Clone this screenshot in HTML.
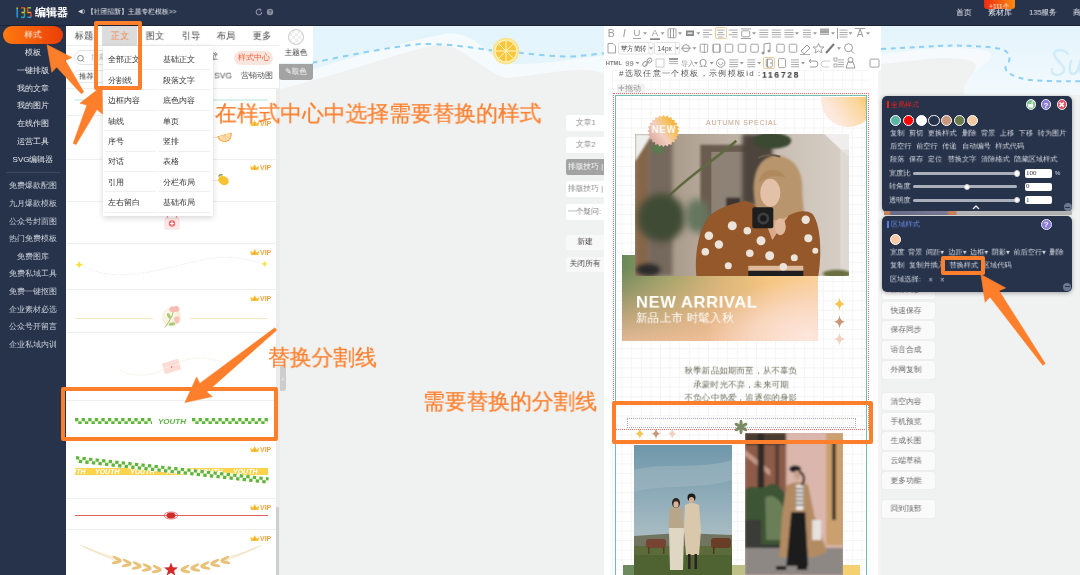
<!DOCTYPE html><html><head><meta charset="utf-8"><style>
*{margin:0;padding:0;box-sizing:border-box}
html,body{width:1080px;height:575px;overflow:hidden;background:#f0f2f1;font-family:"Liberation Sans",sans-serif}
.a{position:absolute}
.t{position:absolute;white-space:nowrap;line-height:1;will-change:transform}
.tc{position:absolute;white-space:nowrap;line-height:1;transform:translate(-50%,-50%);will-change:transform}
</style></head><body><svg class="a" style="left:276px;top:25px" width="330" height="140" viewBox="276 25 330 140">
<defs><linearGradient id="sky1" x1="0" y1="0" x2="0" y2="1"><stop offset="0" stop-color="#e3f4fc"/><stop offset="1" stop-color="#eef8fc"/></linearGradient></defs>
<rect x="276" y="25" width="330" height="140" fill="url(#sky1)"/>
<path d="M276 80 C320 68 400 42 440 35 Q455 31 470 38 C488 48 492 62 515 64 C540 65 570 59 606 55.5 L606 165 L276 165 Z" fill="#f5fafd"/>
<path d="M276 90 C330 77 400 53 433 45.5 Q447 43 462 52 C480 62 492 76 508 78 C530 76 560 70 580 70 C592 70 600 72 606 74 L606 165 L276 165Z" fill="#f0f2f1"/>
<path d="M312 62.8 C350 55 390 47 418 44.2 C440 43 470 47 492 50.5 M518 52.5 C540 55 555 56.5 570 56.5 C585 56 595 54 606 53.2" fill="none" stroke="#8dd0f2" stroke-width="2" stroke-dasharray="5.5 5"/>
</svg><svg class="a" style="left:492px;top:37px" width="28" height="28" viewBox="0 0 28 28">
<circle cx="14" cy="14" r="13.3" fill="#fbe38a"/><circle cx="14" cy="14" r="11.5" fill="#fff3c0"/><circle cx="14" cy="14" r="10.3" fill="#fcc63a"/>
<g stroke="#fff6d0" stroke-width="1">
<line x1="14" y1="4" x2="14" y2="24"/><line x1="4" y1="14" x2="24" y2="14"/><line x1="7" y1="7" x2="21" y2="21"/><line x1="21" y1="7" x2="7" y2="21"/></g>
</svg><div class="a" style="left:0;top:0;width:1080px;height:25px;background:#27334b"></div><svg class="a" style="left:0;top:0" width="40" height="25" viewBox="0 0 40 25"><g stroke-width="1.5" stroke-linecap="butt" fill="none"><path d="M17.2 9 V17.5" stroke="#1d9fe0"/><path d="M17.2 7.6 V9" stroke="#f2c21a"/><path d="M21 7.8 H24.5" stroke="#e8452a"/><path d="M24.5 7.8 V12.5" stroke="#8cc43a"/><path d="M21.5 12.5 H24.5" stroke="#f6c21c"/><path d="M24.5 12.5 V17.3" stroke="#3aaa5a"/><path d="M21 17.3 H24.5" stroke="#1d9fe0"/><path d="M27.5 7.8 H31" stroke="#8cc43a"/><path d="M27.5 7.8 V12.5" stroke="#e8452a"/><path d="M27.5 12.5 H31" stroke="#f6a21c"/><path d="M31 12.5 V17.3" stroke="#e8452a"/><path d="M27.5 17.3 H31" stroke="#1d9fe0"/></g></svg><div class="t" style="left:35.4px;top:7.1px;font-size:11px;color:#fff;font-weight:bold">编辑器</div><div class="t" style="left:78px;top:8px;font-size:6px;color:#d8dce4;">◀)</div><div class="t" style="left:86.5px;top:8.1px;font-size:7px;color:#eef0f4;transform:scale(0.9714);transform-origin:0 0;">【社团招新】主题专栏模板>></div><svg class="a" style="left:254px;top:7px" width="22" height="10" viewBox="0 0 22 10"><path d="M7.8 5 A2.8 2.8 0 1 1 7 3" fill="none" stroke="#8a92a0" stroke-width="1.1"/><path d="M5.8 1.8 L7.3 3.2 L5.8 4.4" fill="none" stroke="#8a92a0" stroke-width="0.9"/><circle cx="16" cy="5" r="3.2" fill="#8a92a0"/><text x="16" y="7" font-size="5" font-weight="bold" fill="#27334b" text-anchor="middle" font-family="Liberation Sans">?</text></svg><div class="t" style="left:956px;top:8.5px;font-size:8px;color:#e6e9ee;transform:scale(0.9750);transform-origin:0 0;">首页</div><div class="t" style="left:988px;top:8.5px;font-size:8px;color:#e6e9ee;">素材库</div><div class="a" style="left:984px;top:0;width:31px;height:9px;background:linear-gradient(90deg,#ee2a10,#ff8a10);border-radius:0 0 3px 3px"></div><div class="t" style="left:989px;top:2.6px;font-size:7px;color:#fff;transform:scale(0.9286);transform-origin:0 0;">+111个</div><div class="t" style="left:1028.8px;top:8.5px;font-size:8px;color:#e6e9ee;transform:scale(0.9500);transform-origin:0 0;">135服务</div><div class="t" style="left:1073px;top:8.5px;font-size:8px;color:#e6e9ee;transform:scale(0.9750);transform-origin:0 0;">商</div><div class="a" style="left:0;top:25px;width:66px;height:550px;background:#27334b"></div><div class="a" style="left:3px;top:26px;width:60px;height:18px;border-radius:9px;background:linear-gradient(90deg,#ff7a10,#ea3e08)"></div><div class="tc" style="left:33px;top:35px;font-size:9px;color:#fff;transform:translate(-50%,-50%) scale(0.9444);">样式</div><div class="tc" style="left:33px;top:53.0px;font-size:8px;color:#e4e7ec;">模板</div><div class="tc" style="left:33px;top:70.75px;font-size:8px;color:#e4e7ec;">一键排版</div><div class="tc" style="left:33px;top:88.5px;font-size:8px;color:#e4e7ec;">我的文章</div><div class="tc" style="left:33px;top:106.25px;font-size:8px;color:#e4e7ec;">我的图片</div><div class="tc" style="left:33px;top:124.0px;font-size:8px;color:#e4e7ec;">在线作图</div><div class="tc" style="left:33px;top:141.75px;font-size:8px;color:#e4e7ec;">运营工具</div><div class="tc" style="left:33px;top:159.5px;font-size:8px;color:#e4e7ec;">SVG编辑器</div><div class="a" style="left:6px;top:172px;width:54px;height:1px;background:#3d4960"></div><div class="tc" style="left:33px;top:186.3px;font-size:8px;color:#c9ced8;">免费爆款配图</div><div class="tc" style="left:33px;top:203.9px;font-size:8px;color:#c9ced8;">九月爆款模板</div><div class="tc" style="left:33px;top:221.5px;font-size:8px;color:#c9ced8;">公众号封面图</div><div class="tc" style="left:33px;top:239.10000000000002px;font-size:8px;color:#c9ced8;">热门免费模板</div><div class="tc" style="left:33px;top:256.70000000000005px;font-size:8px;color:#c9ced8;">免费图库</div><div class="tc" style="left:33px;top:274.3px;font-size:8px;color:#c9ced8;">免费私域工具</div><div class="tc" style="left:33px;top:291.90000000000003px;font-size:8px;color:#c9ced8;">免费一键抠图</div><div class="tc" style="left:33px;top:309.5px;font-size:8px;color:#c9ced8;">企业素材必选</div><div class="tc" style="left:33px;top:327.1px;font-size:8px;color:#c9ced8;">公众号开留言</div><div class="tc" style="left:33px;top:344.70000000000005px;font-size:8px;color:#c9ced8;">企业私域内训</div><div class="a" style="left:66px;top:25px;width:210px;height:550px;background:#fff"></div><div class="a" style="left:276px;top:25px;width:4px;height:550px;background:#ececec"></div><div class="a" style="left:66px;top:25px;width:213px;height:64px;background:#fff;border-bottom:1px solid #eee"></div><div class="a" style="left:66px;top:45px;width:213px;height:1px;background:#eee"></div><div class="a" style="left:102px;top:25px;width:35px;height:21px;background:#dcdcdc"></div><div class="tc" style="left:84px;top:35.5px;font-size:10px;color:#444;transform:translate(-50%,-50%) scale(0.9300);">标题</div><div class="tc" style="left:119.5px;top:35.5px;font-size:10px;color:#f08040;transform:translate(-50%,-50%) scale(0.9300);">正文</div><div class="tc" style="left:155px;top:35.5px;font-size:10px;color:#444;transform:translate(-50%,-50%) scale(0.9300);">图文</div><div class="tc" style="left:191px;top:35.5px;font-size:10px;color:#444;transform:translate(-50%,-50%) scale(0.9300);">引导</div><div class="tc" style="left:226px;top:35.5px;font-size:10px;color:#444;transform:translate(-50%,-50%) scale(0.9300);">布局</div><div class="tc" style="left:261.5px;top:35.5px;font-size:10px;color:#444;transform:translate(-50%,-50%) scale(0.9300);">更多</div><div class="a" style="left:279px;top:25px;width:34px;height:38px;background:#fff"></div><div class="a" style="left:288px;top:29px;width:16px;height:16px;border-radius:50%;border:1px solid #ccc;background:repeating-conic-gradient(#eee 0 25%,#fff 0 50%) 0 0/6px 6px"></div><div class="tc" style="left:296px;top:53px;font-size:8px;color:#333;transform:translate(-50%,-50%) scale(0.9375);">主题色</div><div class="a" style="left:279px;top:64px;width:34px;height:16px;background:#a3a3a3;border-radius:0 0 3px 3px"></div><div class="tc" style="left:296px;top:72px;font-size:8px;color:#fff;transform:translate(-50%,-50%) scale(0.9375);">✎取色</div><div class="a" style="left:73.5px;top:50.3px;width:60px;height:15px;border:1px solid #e4e4e4;border-radius:8px;background:#fff"></div><svg class="a" style="left:76px;top:54px" width="10" height="10" viewBox="0 0 10 10"><circle cx="4.5" cy="4.2" r="2.8" fill="none" stroke="#888" stroke-width="1"/><path d="M6.5 6.3 L8 7.8" stroke="#888" stroke-width="1"/></svg><div class="t" style="left:90.5px;top:54px;font-size:8px;color:#bbb;transform:scale(0.9125);transform-origin:0 0;">搜索</div><div class="a" style="left:234px;top:51px;width:39px;height:14px;border-radius:7px;background:#fde5df"></div><div class="tc" style="left:253.5px;top:58px;font-size:8px;color:#f3623a;">样式中心</div><div class="t" style="left:210px;top:53px;font-size:8px;color:#666;">壁</div><div class="a" style="left:73.2px;top:70.3px;width:34px;height:12.5px;border:1px solid #e6e6e6;border-radius:6px"></div><div class="t" style="left:79px;top:72.8px;font-size:8px;color:#333;transform:scale(0.9125);transform-origin:0 0;">推荐</div><div class="tc" style="left:222.5px;top:76px;font-size:9px;color:#555;transform:translate(-50%,-50%) scale(0.9444);">SVG</div><div class="tc" style="left:257px;top:76px;font-size:8px;color:#555;">营销动图</div><div class="a" style="left:66px;top:114.5px;width:210px;height:1px;background:#efefef"></div><div class="a" style="left:66px;top:159px;width:210px;height:1px;background:#efefef"></div><div class="a" style="left:66px;top:201px;width:210px;height:1px;background:#efefef"></div><div class="a" style="left:66px;top:243px;width:210px;height:1px;background:#efefef"></div><div class="a" style="left:66px;top:289px;width:210px;height:1px;background:#efefef"></div><div class="a" style="left:66px;top:332px;width:210px;height:1px;background:#efefef"></div><div class="a" style="left:66px;top:400px;width:210px;height:1px;background:#efefef"></div><div class="a" style="left:66px;top:498px;width:210px;height:1px;background:#efefef"></div><div class="a" style="left:66px;top:529px;width:210px;height:1px;background:#efefef"></div><div class="a" style="left:75px;top:99px;width:193px;height:1.5px;background:#d8f2ec"></div><svg class="a" style="left:250.2px;top:119.9px" width="9.4" height="6.2" viewBox="0 0 9.4 6.2"><path d="M0.2 1.4 L2.6 3.6 L4.7 0.2 L6.8 3.6 L9.2 1.4 L8.4 6 H1Z" fill="#f7c23a"/><circle cx="4.7" cy="4.3" r="0.8" fill="#f08a4a"/></svg><div class="t" style="left:260px;top:119.9px;font-size:7px;color:#f5a23f;font-weight:bold">VIP</div><svg class="a" style="left:250.2px;top:163.9px" width="9.4" height="6.2" viewBox="0 0 9.4 6.2"><path d="M0.2 1.4 L2.6 3.6 L4.7 0.2 L6.8 3.6 L9.2 1.4 L8.4 6 H1Z" fill="#f7c23a"/><circle cx="4.7" cy="4.3" r="0.8" fill="#f08a4a"/></svg><div class="t" style="left:260px;top:163.9px;font-size:7px;color:#f5a23f;font-weight:bold">VIP</div><svg class="a" style="left:250.2px;top:248.9px" width="9.4" height="6.2" viewBox="0 0 9.4 6.2"><path d="M0.2 1.4 L2.6 3.6 L4.7 0.2 L6.8 3.6 L9.2 1.4 L8.4 6 H1Z" fill="#f7c23a"/><circle cx="4.7" cy="4.3" r="0.8" fill="#f08a4a"/></svg><div class="t" style="left:260px;top:248.9px;font-size:7px;color:#f5a23f;font-weight:bold">VIP</div><svg class="a" style="left:250.2px;top:294.9px" width="9.4" height="6.2" viewBox="0 0 9.4 6.2"><path d="M0.2 1.4 L2.6 3.6 L4.7 0.2 L6.8 3.6 L9.2 1.4 L8.4 6 H1Z" fill="#f7c23a"/><circle cx="4.7" cy="4.3" r="0.8" fill="#f08a4a"/></svg><div class="t" style="left:260px;top:294.9px;font-size:7px;color:#f5a23f;font-weight:bold">VIP</div><svg class="a" style="left:250.2px;top:446.4px" width="9.4" height="6.2" viewBox="0 0 9.4 6.2"><path d="M0.2 1.4 L2.6 3.6 L4.7 0.2 L6.8 3.6 L9.2 1.4 L8.4 6 H1Z" fill="#f7c23a"/><circle cx="4.7" cy="4.3" r="0.8" fill="#f08a4a"/></svg><div class="t" style="left:260px;top:446.4px;font-size:7px;color:#f5a23f;font-weight:bold">VIP</div><svg class="a" style="left:250.2px;top:503.9px" width="9.4" height="6.2" viewBox="0 0 9.4 6.2"><path d="M0.2 1.4 L2.6 3.6 L4.7 0.2 L6.8 3.6 L9.2 1.4 L8.4 6 H1Z" fill="#f7c23a"/><circle cx="4.7" cy="4.3" r="0.8" fill="#f08a4a"/></svg><div class="t" style="left:260px;top:503.9px;font-size:7px;color:#f5a23f;font-weight:bold">VIP</div><svg class="a" style="left:250.2px;top:534.9px" width="9.4" height="6.2" viewBox="0 0 9.4 6.2"><path d="M0.2 1.4 L2.6 3.6 L4.7 0.2 L6.8 3.6 L9.2 1.4 L8.4 6 H1Z" fill="#f7c23a"/><circle cx="4.7" cy="4.3" r="0.8" fill="#f08a4a"/></svg><div class="t" style="left:260px;top:534.9px;font-size:7px;color:#f5a23f;font-weight:bold">VIP</div><svg class="a" style="left:210px;top:128px" width="26" height="18" viewBox="210 128 26 18"><g transform="rotate(-16 224.5 135)"><path d="M217 134.5 A7.5 7.5 0 0 0 232 134.5Z" fill="#f9a845"/><path d="M218.5 135 A6 6 0 0 0 230.5 135Z" fill="#fde2b8"/><path d="M224.5 135 L221 139 M224.5 135 L224.5 140.5 M224.5 135 L228 139" stroke="#f9b860" stroke-width="0.6"/></g><path d="M212 137.5 H217" stroke="#f6dcc0" stroke-width="0.8"/></svg><svg class="a" style="left:210px;top:172px" width="24" height="16" viewBox="210 172 24 16"><ellipse cx="223.5" cy="180.5" rx="5.5" ry="4.3" fill="#f6c232" transform="rotate(25 223.5 180.5)"/><path d="M218.5 176.5 Q220 174 222.5 175" stroke="#7a9a40" stroke-width="1.4" fill="none"/><path d="M212 180.5 H218" stroke="#f6dcc0" stroke-width="0.8"/></svg><svg class="a" style="left:164px;top:214px" width="16" height="16" viewBox="0 0 16 16"><rect x="1" y="4" width="14" height="11" rx="1" fill="#fdeaea" stroke="#f8d0d0" stroke-width="0.6"/><path d="M3.5 4 V1.5 M12.5 4 V1.5" stroke="#f29a9a" stroke-width="1.2"/><circle cx="8" cy="9.5" r="3.2" fill="#ee6a6c"/><path d="M8 7.6V11.4M6.1 9.5H9.9" stroke="#fff" stroke-width="1.1"/></svg><svg class="a" style="left:70px;top:250px" width="205" height="30" viewBox="70 250 205 30"><path d="M80 265 C100 275 115 275.5 130 274.5 C170 271 200 256 230 257.5 C245 258 255 262 264 264" fill="none" stroke="#e4e8f4" stroke-width="1" stroke-dasharray="1.3 1.5"/><path d="M79.2 260.6 Q79.6704 264.3296 83.4 264.8 Q79.6704 265.2704 79.2 269.0 Q78.7296 265.2704 75.0 264.8 Q78.7296 264.3296 79.2 260.6Z" fill="#fbe23a"/><path d="M264.6 260.6 Q264.98080000000004 263.6192 268.0 264 Q264.98080000000004 264.3808 264.6 267.4 Q264.2192 264.3808 261.20000000000005 264 Q264.2192 263.6192 264.6 260.6Z" fill="#fbe23a"/></svg><div class="a" style="left:75px;top:317.8px;width:78px;height:1px;background:#f6e6c4"></div><div class="a" style="left:190px;top:317.8px;width:77px;height:1px;background:#f6e6c4"></div><svg class="a" style="left:160px;top:302px" width="24" height="28" viewBox="160 302 24 28"><defs><radialGradient id="flc" cx="0.4" cy="0.4" r="0.7"><stop offset="0" stop-color="#fefaf0"/><stop offset="1" stop-color="#f7ead0"/></radialGradient></defs>
<circle cx="171.5" cy="317" r="9.5" fill="url(#flc)"/>
<path d="M165 327.5 Q169 322 172 316 Q173 312 174 310" stroke="#9cc46e" stroke-width="1" fill="none"/>
<ellipse cx="169" cy="316" rx="1.6" ry="3.2" fill="#a8cc78" transform="rotate(-30 169 316)"/>
<ellipse cx="172" cy="324" rx="3.2" ry="1.5" fill="#a8cc78" transform="rotate(-10 172 324)"/>
<path d="M169 309 Q171 305 174 307 Q177 304 179 308 Q181 312 175 312 Q170 313 169 309Z" fill="#f9bcb2"/>
<path d="M174 318 Q176 315 179 317 Q181 320 178 323 Q174 324 174 318Z" fill="#f9c2b8"/>
</svg><svg class="a" style="left:110px;top:350px" width="160" height="30" viewBox="110 350 160 30">
<path d="M120 370.5 C132 377 150 377 164 369 M180 362 C192 357 208 356 224 363.5" fill="none" stroke="#f0e6cc" stroke-width="0.8" stroke-dasharray="1.2 1.2"/>
<g transform="rotate(-17 171.5 366.5)"><rect x="163" y="361" width="17" height="11" fill="#fcdcd4"/><path d="M163 366 H180" stroke="#fff3f0" stroke-width="0.6"/><circle cx="171.5" cy="367" r="0.9" fill="#f08080"/></g>
</svg><svg class="a" style="left:75px;top:417.6px" width="77" height="6.6" viewBox="0 0 77 6.6"><rect width="77" height="6.6" fill="#fdf9e6"/><rect x="0.00" y="0.00" width="3.3" height="3.3" fill="#5ab544"/><rect x="3.30" y="3.30" width="3.3" height="3.3" fill="#5ab544"/><rect x="6.60" y="0.00" width="3.3" height="3.3" fill="#5ab544"/><rect x="9.90" y="3.30" width="3.3" height="3.3" fill="#5ab544"/><rect x="13.20" y="0.00" width="3.3" height="3.3" fill="#5ab544"/><rect x="16.50" y="3.30" width="3.3" height="3.3" fill="#5ab544"/><rect x="19.80" y="0.00" width="3.3" height="3.3" fill="#5ab544"/><rect x="23.10" y="3.30" width="3.3" height="3.3" fill="#5ab544"/><rect x="26.40" y="0.00" width="3.3" height="3.3" fill="#5ab544"/><rect x="29.70" y="3.30" width="3.3" height="3.3" fill="#5ab544"/><rect x="33.00" y="0.00" width="3.3" height="3.3" fill="#5ab544"/><rect x="36.30" y="3.30" width="3.3" height="3.3" fill="#5ab544"/><rect x="39.60" y="0.00" width="3.3" height="3.3" fill="#5ab544"/><rect x="42.90" y="3.30" width="3.3" height="3.3" fill="#5ab544"/><rect x="46.20" y="0.00" width="3.3" height="3.3" fill="#5ab544"/><rect x="49.50" y="3.30" width="3.3" height="3.3" fill="#5ab544"/><rect x="52.80" y="0.00" width="3.3" height="3.3" fill="#5ab544"/><rect x="56.10" y="3.30" width="3.3" height="3.3" fill="#5ab544"/><rect x="59.40" y="0.00" width="3.3" height="3.3" fill="#5ab544"/><rect x="62.70" y="3.30" width="3.3" height="3.3" fill="#5ab544"/><rect x="66.00" y="0.00" width="3.3" height="3.3" fill="#5ab544"/><rect x="69.30" y="3.30" width="3.3" height="3.3" fill="#5ab544"/><rect x="72.60" y="0.00" width="3.3" height="3.3" fill="#5ab544"/><rect x="75.90" y="3.30" width="3.3" height="3.3" fill="#5ab544"/></svg><svg class="a" style="left:192px;top:417.6px" width="76" height="6.6" viewBox="0 0 76 6.6"><rect width="76" height="6.6" fill="#fdf9e6"/><rect x="0.00" y="0.00" width="3.3" height="3.3" fill="#5ab544"/><rect x="3.30" y="3.30" width="3.3" height="3.3" fill="#5ab544"/><rect x="6.60" y="0.00" width="3.3" height="3.3" fill="#5ab544"/><rect x="9.90" y="3.30" width="3.3" height="3.3" fill="#5ab544"/><rect x="13.20" y="0.00" width="3.3" height="3.3" fill="#5ab544"/><rect x="16.50" y="3.30" width="3.3" height="3.3" fill="#5ab544"/><rect x="19.80" y="0.00" width="3.3" height="3.3" fill="#5ab544"/><rect x="23.10" y="3.30" width="3.3" height="3.3" fill="#5ab544"/><rect x="26.40" y="0.00" width="3.3" height="3.3" fill="#5ab544"/><rect x="29.70" y="3.30" width="3.3" height="3.3" fill="#5ab544"/><rect x="33.00" y="0.00" width="3.3" height="3.3" fill="#5ab544"/><rect x="36.30" y="3.30" width="3.3" height="3.3" fill="#5ab544"/><rect x="39.60" y="0.00" width="3.3" height="3.3" fill="#5ab544"/><rect x="42.90" y="3.30" width="3.3" height="3.3" fill="#5ab544"/><rect x="46.20" y="0.00" width="3.3" height="3.3" fill="#5ab544"/><rect x="49.50" y="3.30" width="3.3" height="3.3" fill="#5ab544"/><rect x="52.80" y="0.00" width="3.3" height="3.3" fill="#5ab544"/><rect x="56.10" y="3.30" width="3.3" height="3.3" fill="#5ab544"/><rect x="59.40" y="0.00" width="3.3" height="3.3" fill="#5ab544"/><rect x="62.70" y="3.30" width="3.3" height="3.3" fill="#5ab544"/><rect x="66.00" y="0.00" width="3.3" height="3.3" fill="#5ab544"/><rect x="69.30" y="3.30" width="3.3" height="3.3" fill="#5ab544"/><rect x="72.60" y="0.00" width="3.3" height="3.3" fill="#5ab544"/><rect x="75.90" y="3.30" width="3.3" height="3.3" fill="#5ab544"/></svg><div class="tc" style="left:171.5px;top:421.5px;font-size:8px;color:#5ab544;font-weight:bold;font-style:italic">YOUTH</div><div class="a" style="left:75px;top:467.5px;width:193px;height:7.5px;background:#fcd34a"></div><div class="a" style="left:75px;top:467.5px;width:193px;height:7.5px;overflow:hidden"><div class="t" style="left:-14.5px;top:0.6px;font-size:7px;color:#fff;font-weight:bold;font-style:italic">YOUTH</div><div class="t" style="left:20.200000000000003px;top:0.6px;font-size:7px;color:#fff;font-weight:bold;font-style:italic">YOUTH</div><div class="t" style="left:55px;top:0.6px;font-size:7px;color:#fff;font-weight:bold;font-style:italic">YOUTH</div><div class="t" style="left:89.5px;top:0.6px;font-size:7px;color:#fff;font-weight:bold;font-style:italic">YOUTH</div><div class="t" style="left:123.30000000000001px;top:0.6px;font-size:7px;color:#fff;font-weight:bold;font-style:italic">YOUTH</div><div class="t" style="left:158.3px;top:0.6px;font-size:7px;color:#fff;font-weight:bold;font-style:italic">YOUTH</div></div><div class="a" style="left:75.5px;top:455.5px;width:194px;height:6.6px;transform-origin:0 0;transform:rotate(6.3deg)"><svg style="position:absolute;left:0;top:0" width="194" height="6.6" viewBox="0 0 194 6.6"><rect width="194" height="6.6" fill="#fdf9e6"/><rect x="0.00" y="0.00" width="3.3" height="3.3" fill="#5ab544"/><rect x="3.30" y="3.30" width="3.3" height="3.3" fill="#5ab544"/><rect x="6.60" y="0.00" width="3.3" height="3.3" fill="#5ab544"/><rect x="9.90" y="3.30" width="3.3" height="3.3" fill="#5ab544"/><rect x="13.20" y="0.00" width="3.3" height="3.3" fill="#5ab544"/><rect x="16.50" y="3.30" width="3.3" height="3.3" fill="#5ab544"/><rect x="19.80" y="0.00" width="3.3" height="3.3" fill="#5ab544"/><rect x="23.10" y="3.30" width="3.3" height="3.3" fill="#5ab544"/><rect x="26.40" y="0.00" width="3.3" height="3.3" fill="#5ab544"/><rect x="29.70" y="3.30" width="3.3" height="3.3" fill="#5ab544"/><rect x="33.00" y="0.00" width="3.3" height="3.3" fill="#5ab544"/><rect x="36.30" y="3.30" width="3.3" height="3.3" fill="#5ab544"/><rect x="39.60" y="0.00" width="3.3" height="3.3" fill="#5ab544"/><rect x="42.90" y="3.30" width="3.3" height="3.3" fill="#5ab544"/><rect x="46.20" y="0.00" width="3.3" height="3.3" fill="#5ab544"/><rect x="49.50" y="3.30" width="3.3" height="3.3" fill="#5ab544"/><rect x="52.80" y="0.00" width="3.3" height="3.3" fill="#5ab544"/><rect x="56.10" y="3.30" width="3.3" height="3.3" fill="#5ab544"/><rect x="59.40" y="0.00" width="3.3" height="3.3" fill="#5ab544"/><rect x="62.70" y="3.30" width="3.3" height="3.3" fill="#5ab544"/><rect x="66.00" y="0.00" width="3.3" height="3.3" fill="#5ab544"/><rect x="69.30" y="3.30" width="3.3" height="3.3" fill="#5ab544"/><rect x="72.60" y="0.00" width="3.3" height="3.3" fill="#5ab544"/><rect x="75.90" y="3.30" width="3.3" height="3.3" fill="#5ab544"/><rect x="79.20" y="0.00" width="3.3" height="3.3" fill="#5ab544"/><rect x="82.50" y="3.30" width="3.3" height="3.3" fill="#5ab544"/><rect x="85.80" y="0.00" width="3.3" height="3.3" fill="#5ab544"/><rect x="89.10" y="3.30" width="3.3" height="3.3" fill="#5ab544"/><rect x="92.40" y="0.00" width="3.3" height="3.3" fill="#5ab544"/><rect x="95.70" y="3.30" width="3.3" height="3.3" fill="#5ab544"/><rect x="99.00" y="0.00" width="3.3" height="3.3" fill="#5ab544"/><rect x="102.30" y="3.30" width="3.3" height="3.3" fill="#5ab544"/><rect x="105.60" y="0.00" width="3.3" height="3.3" fill="#5ab544"/><rect x="108.90" y="3.30" width="3.3" height="3.3" fill="#5ab544"/><rect x="112.20" y="0.00" width="3.3" height="3.3" fill="#5ab544"/><rect x="115.50" y="3.30" width="3.3" height="3.3" fill="#5ab544"/><rect x="118.80" y="0.00" width="3.3" height="3.3" fill="#5ab544"/><rect x="122.10" y="3.30" width="3.3" height="3.3" fill="#5ab544"/><rect x="125.40" y="0.00" width="3.3" height="3.3" fill="#5ab544"/><rect x="128.70" y="3.30" width="3.3" height="3.3" fill="#5ab544"/><rect x="132.00" y="0.00" width="3.3" height="3.3" fill="#5ab544"/><rect x="135.30" y="3.30" width="3.3" height="3.3" fill="#5ab544"/><rect x="138.60" y="0.00" width="3.3" height="3.3" fill="#5ab544"/><rect x="141.90" y="3.30" width="3.3" height="3.3" fill="#5ab544"/><rect x="145.20" y="0.00" width="3.3" height="3.3" fill="#5ab544"/><rect x="148.50" y="3.30" width="3.3" height="3.3" fill="#5ab544"/><rect x="151.80" y="0.00" width="3.3" height="3.3" fill="#5ab544"/><rect x="155.10" y="3.30" width="3.3" height="3.3" fill="#5ab544"/><rect x="158.40" y="0.00" width="3.3" height="3.3" fill="#5ab544"/><rect x="161.70" y="3.30" width="3.3" height="3.3" fill="#5ab544"/><rect x="165.00" y="0.00" width="3.3" height="3.3" fill="#5ab544"/><rect x="168.30" y="3.30" width="3.3" height="3.3" fill="#5ab544"/><rect x="171.60" y="0.00" width="3.3" height="3.3" fill="#5ab544"/><rect x="174.90" y="3.30" width="3.3" height="3.3" fill="#5ab544"/><rect x="178.20" y="0.00" width="3.3" height="3.3" fill="#5ab544"/><rect x="181.50" y="3.30" width="3.3" height="3.3" fill="#5ab544"/><rect x="184.80" y="0.00" width="3.3" height="3.3" fill="#5ab544"/><rect x="188.10" y="3.30" width="3.3" height="3.3" fill="#5ab544"/><rect x="191.40" y="0.00" width="3.3" height="3.3" fill="#5ab544"/></svg></div><div class="a" style="left:75px;top:515px;width:193px;height:1px;background:#e06060"></div><svg class="a" style="left:163px;top:511px" width="16" height="9" viewBox="0 0 16 9"><ellipse cx="8" cy="4.5" rx="7" ry="3.5" fill="none" stroke="#e06060" stroke-width="0.8"/><ellipse cx="8" cy="4.5" rx="4.5" ry="3" fill="#d02a2a"/></svg><svg class="a" style="left:0;top:0" width="1080" height="575" viewBox="0 0 1080 575"><path d="M80 545.0 Q98 553.0 116.0 558.0" stroke="#f2dfba" stroke-width="0.7" fill="none"/><path d="M83 546.5 Q101 554.5 116.9 559.8" stroke="#f2dfba" stroke-width="0.7" fill="none"/><path d="M86 548.0 Q104 556.0 117.8 561.6" stroke="#f2dfba" stroke-width="0.7" fill="none"/><g transform="translate(121 561) scale(1 1)"><ellipse cx="-4.5" cy="0" rx="5" ry="1.5" transform="rotate(28) translate(0 -0.3)" fill="#e8c27a"/><ellipse cx="-4.5" cy="0" rx="5" ry="1.5" transform="rotate(-12) translate(0 0.3)" fill="#e8c27a"/></g><g transform="translate(131 564) scale(1 1)"><ellipse cx="-4.5" cy="0" rx="5" ry="1.5" transform="rotate(28) translate(0 -0.3)" fill="#e8c27a"/><ellipse cx="-4.5" cy="0" rx="5" ry="1.5" transform="rotate(-12) translate(0 0.3)" fill="#e8c27a"/></g><g transform="translate(141 566.5) scale(1 1)"><ellipse cx="-4.5" cy="0" rx="5" ry="1.5" transform="rotate(28) translate(0 -0.3)" fill="#e8c27a"/><ellipse cx="-4.5" cy="0" rx="5" ry="1.5" transform="rotate(-12) translate(0 0.3)" fill="#e8c27a"/></g><g transform="translate(151 568.5) scale(1 1)"><ellipse cx="-4.5" cy="0" rx="5" ry="1.5" transform="rotate(28) translate(0 -0.3)" fill="#e8c27a"/><ellipse cx="-4.5" cy="0" rx="5" ry="1.5" transform="rotate(-12) translate(0 0.3)" fill="#e8c27a"/></g><g transform="translate(161 570) scale(1 1)"><ellipse cx="-4.5" cy="0" rx="5" ry="1.5" transform="rotate(28) translate(0 -0.3)" fill="#e8c27a"/><ellipse cx="-4.5" cy="0" rx="5" ry="1.5" transform="rotate(-12) translate(0 0.3)" fill="#e8c27a"/></g><path d="M262 545.0 Q244 553.0 226.0 558.0" stroke="#f2dfba" stroke-width="0.7" fill="none"/><path d="M259 546.5 Q241 554.5 225.1 559.8" stroke="#f2dfba" stroke-width="0.7" fill="none"/><path d="M256 548.0 Q238 556.0 224.2 561.6" stroke="#f2dfba" stroke-width="0.7" fill="none"/><g transform="translate(221 561) scale(-1 1)"><ellipse cx="-4.5" cy="0" rx="5" ry="1.5" transform="rotate(28) translate(0 -0.3)" fill="#e8c27a"/><ellipse cx="-4.5" cy="0" rx="5" ry="1.5" transform="rotate(-12) translate(0 0.3)" fill="#e8c27a"/></g><g transform="translate(211 564) scale(-1 1)"><ellipse cx="-4.5" cy="0" rx="5" ry="1.5" transform="rotate(28) translate(0 -0.3)" fill="#e8c27a"/><ellipse cx="-4.5" cy="0" rx="5" ry="1.5" transform="rotate(-12) translate(0 0.3)" fill="#e8c27a"/></g><g transform="translate(201 566.5) scale(-1 1)"><ellipse cx="-4.5" cy="0" rx="5" ry="1.5" transform="rotate(28) translate(0 -0.3)" fill="#e8c27a"/><ellipse cx="-4.5" cy="0" rx="5" ry="1.5" transform="rotate(-12) translate(0 0.3)" fill="#e8c27a"/></g><g transform="translate(191 568.5) scale(-1 1)"><ellipse cx="-4.5" cy="0" rx="5" ry="1.5" transform="rotate(28) translate(0 -0.3)" fill="#e8c27a"/><ellipse cx="-4.5" cy="0" rx="5" ry="1.5" transform="rotate(-12) translate(0 0.3)" fill="#e8c27a"/></g><g transform="translate(181 570) scale(-1 1)"><ellipse cx="-4.5" cy="0" rx="5" ry="1.5" transform="rotate(28) translate(0 -0.3)" fill="#e8c27a"/><ellipse cx="-4.5" cy="0" rx="5" ry="1.5" transform="rotate(-12) translate(0 0.3)" fill="#e8c27a"/></g><path d="M171 562.5 L172.9 567.3 L178 567.5 L174 570.7 L175.4 575.6 L171 572.8 L166.6 575.6 L168 570.7 L164 567.5 L169.1 567.3Z" fill="#d42a2a"/></svg><div class="a" style="left:275.5px;top:507px;width:3.5px;height:68px;background:#cfcfcf"></div><div class="a" style="left:280px;top:366px;width:6px;height:25px;background:#cdcdcd;border-radius:0 3px 3px 0"></div><div class="tc" style="left:283px;top:378.5px;font-size:7px;color:#fff;">‹</div><div class="a" style="left:102.5px;top:46px;width:110px;height:170px;background:#fff;box-shadow:0 2px 6px rgba(0,0,0,0.16)"></div><div class="t" style="left:108px;top:56.300000000000004px;font-size:8px;color:#333;">全部正文</div><div class="t" style="left:163px;top:56.300000000000004px;font-size:8px;color:#333;">基础正文</div><div class="a" style="left:105px;top:68.9px;width:51px;height:1px;background:#f0f0f0"></div><div class="a" style="left:158px;top:68.9px;width:52px;height:1px;background:#f0f0f0"></div><div class="t" style="left:108px;top:76.69999999999999px;font-size:8px;color:#333;">分割线</div><div class="t" style="left:163px;top:76.69999999999999px;font-size:8px;color:#333;">段落文字</div><div class="a" style="left:105px;top:89.3px;width:51px;height:1px;background:#f0f0f0"></div><div class="a" style="left:158px;top:89.3px;width:52px;height:1px;background:#f0f0f0"></div><div class="t" style="left:108px;top:97.1px;font-size:8px;color:#333;">边框内容</div><div class="t" style="left:163px;top:97.1px;font-size:8px;color:#333;">底色内容</div><div class="a" style="left:105px;top:109.7px;width:51px;height:1px;background:#f0f0f0"></div><div class="a" style="left:158px;top:109.7px;width:52px;height:1px;background:#f0f0f0"></div><div class="t" style="left:108px;top:117.5px;font-size:8px;color:#333;">轴线</div><div class="t" style="left:163px;top:117.5px;font-size:8px;color:#333;">单页</div><div class="a" style="left:105px;top:130.1px;width:51px;height:1px;background:#f0f0f0"></div><div class="a" style="left:158px;top:130.1px;width:52px;height:1px;background:#f0f0f0"></div><div class="t" style="left:108px;top:137.9px;font-size:8px;color:#333;">序号</div><div class="t" style="left:163px;top:137.9px;font-size:8px;color:#333;">竖排</div><div class="a" style="left:105px;top:150.5px;width:51px;height:1px;background:#f0f0f0"></div><div class="a" style="left:158px;top:150.5px;width:52px;height:1px;background:#f0f0f0"></div><div class="t" style="left:108px;top:158.29999999999998px;font-size:8px;color:#333;">对话</div><div class="t" style="left:163px;top:158.29999999999998px;font-size:8px;color:#333;">表格</div><div class="a" style="left:105px;top:170.89999999999998px;width:51px;height:1px;background:#f0f0f0"></div><div class="a" style="left:158px;top:170.89999999999998px;width:52px;height:1px;background:#f0f0f0"></div><div class="t" style="left:108px;top:178.7px;font-size:8px;color:#333;">引用</div><div class="t" style="left:163px;top:178.7px;font-size:8px;color:#333;">分栏布局</div><div class="a" style="left:105px;top:191.29999999999998px;width:51px;height:1px;background:#f0f0f0"></div><div class="a" style="left:158px;top:191.29999999999998px;width:52px;height:1px;background:#f0f0f0"></div><div class="t" style="left:108px;top:199.1px;font-size:8px;color:#333;">左右留白</div><div class="t" style="left:163px;top:199.1px;font-size:8px;color:#333;">基础布局</div><div class="a" style="left:105px;top:211.7px;width:51px;height:1px;background:#f0f0f0"></div><div class="a" style="left:158px;top:211.7px;width:52px;height:1px;background:#f0f0f0"></div><div class="a" style="left:566px;top:115px;width:40px;height:16px;background:#fff;border-radius:2px"></div><div class="t" style="left:576px;top:119.1px;font-size:8px;color:#888;transform:scale(0.9625);transform-origin:0 0;">文章1</div><div class="a" style="left:566px;top:137px;width:40px;height:16px;background:#fff;border-radius:2px"></div><div class="t" style="left:576px;top:141.1px;font-size:8px;color:#888;transform:scale(0.9625);transform-origin:0 0;">文章2</div><div class="a" style="left:566px;top:159px;width:40px;height:16px;background:#a3a3a3;border-radius:2px"></div><div class="t" style="left:567.7px;top:163.1px;font-size:8px;color:#fff;transform:scale(0.9625);transform-origin:0 0;">排版技巧 |</div><div class="a" style="left:566px;top:181px;width:40px;height:16px;background:#fff;border-radius:2px"></div><div class="t" style="left:567.7px;top:185.1px;font-size:8px;color:#888;transform:scale(0.9625);transform-origin:0 0;">排版技巧 |</div><div class="a" style="left:566px;top:203.5px;width:40px;height:16.5px;background:#fff;border-radius:2px"></div><div class="t" style="left:567.7px;top:207.85px;font-size:8px;color:#777;transform:scale(0.9625);transform-origin:0 0;">一个疑问:</div><div class="a" style="left:566px;top:234.5px;width:40px;height:15.5px;background:#f8f8f8;border-radius:2px"></div><div class="tc" style="left:584.5px;top:242.25px;font-size:8px;color:#444;transform:translate(-50%,-50%) scale(0.9625);">新建</div><div class="a" style="left:566px;top:256.5px;width:40px;height:15.5px;background:#f8f8f8;border-radius:2px"></div><div class="tc" style="left:584.5px;top:264.25px;font-size:8px;color:#444;transform:translate(-50%,-50%) scale(0.9625);">关闭所有</div><div class="a" style="left:604px;top:25px;width:277px;height:46px;background:#fff"></div><div class="a" style="left:604px;top:70px;width:274px;height:505px;background:#fff"></div><div class="a" style="left:878px;top:70px;width:3px;height:505px;background:#f4f4f4"></div><div class="a" style="left:611.9px;top:70px;width:258px;height:505px;background-image:linear-gradient(90deg,#f4f4f4 1px,transparent 1px),linear-gradient(#f4f4f4 1px,transparent 1px);background-size:9.6px 9.6px"></div><svg class="a" style="left:0;top:0" width="1080" height="80" viewBox="0 0 1080 80"><text x="611.3" y="33.3" font-size="10.5" fill="#9a9a9a" text-anchor="middle" dominant-baseline="central" font-family="Liberation Sans" >B</text><text x="624.3" y="33.3" font-size="10.5" fill="#9a9a9a" text-anchor="middle" dominant-baseline="central" font-family="Liberation Sans" font-style="italic" font-family="Liberation Serif">I</text><text x="637" y="32.8" font-size="9.5" fill="#9a9a9a" text-anchor="middle" dominant-baseline="central" font-family="Liberation Sans" >U</text><rect x="633" y="38" width="8" height="0.9" fill="#9a9a9a"/><path d="M643 32.3L647 32.3L645 34.8Z" fill="#9a9a9a"/><text x="655" y="32.8" font-size="9.5" fill="#9a9a9a" text-anchor="middle" dominant-baseline="central" font-family="Liberation Sans" >A</text><rect x="650" y="38.5" width="10" height="1.2" fill="#555"/><path d="M660.6 32.3L664.6 32.3L662.6 34.8Z" fill="#9a9a9a"/><rect x="668.0" y="28.799999999999997" width="8" height="9" rx="1" fill="none" stroke="#9a9a9a" stroke-width="0.9"/><rect x="670" y="29" width="1" height="9" fill="#9a9a9a"/><rect x="673" y="29" width="1" height="9" fill="#9a9a9a"/><path d="M678 32.3L682 32.3L680 34.8Z" fill="#9a9a9a"/><rect x="686" y="30.5" width="8" height="5.5" fill="#888"/><rect x="687.5" y="32.3" width="5" height="1.8" fill="#ddd"/><path d="M696.4 32.3L700.4 32.3L698.4 34.8Z" fill="#9a9a9a"/><rect x="703.1" y="29.699999999999996" width="9" height="0.8" fill="#9a9a9a"/><rect x="703.1" y="31.999999999999996" width="5.8500000000000005" height="0.8" fill="#9a9a9a"/><rect x="703.1" y="34.3" width="9" height="0.8" fill="#9a9a9a"/><rect x="703.1" y="36.599999999999994" width="5.8500000000000005" height="0.8" fill="#9a9a9a"/><rect x="716.7" y="29.699999999999996" width="8" height="0.8" fill="#9a9a9a"/><rect x="718.1" y="31.999999999999996" width="5.2" height="0.8" fill="#9a9a9a"/><rect x="716.7" y="34.3" width="8" height="0.8" fill="#9a9a9a"/><rect x="718.1" y="36.599999999999994" width="5.2" height="0.8" fill="#9a9a9a"/><rect x="728.7" y="29.699999999999996" width="9" height="0.8" fill="#9a9a9a"/><rect x="731.85" y="31.999999999999996" width="5.8500000000000005" height="0.8" fill="#9a9a9a"/><rect x="728.7" y="34.3" width="9" height="0.8" fill="#9a9a9a"/><rect x="731.85" y="36.599999999999994" width="5.8500000000000005" height="0.8" fill="#9a9a9a"/><rect x="741.7" y="30.799999999999997" width="8" height="6" rx="1" fill="none" stroke="#9a9a9a" stroke-width="0.9"/><rect x="741" y="28.5" width="10" height="0.9" fill="#9a9a9a"/><rect x="741" y="38" width="10" height="0.9" fill="#9a9a9a"/><path d="M752 32.3L756 32.3L754 34.8Z" fill="#9a9a9a"/><rect x="759.3" y="29.699999999999996" width="9" height="0.8" fill="#9a9a9a"/><rect x="759.3" y="31.999999999999996" width="9" height="0.8" fill="#9a9a9a"/><rect x="759.3" y="34.3" width="9" height="0.8" fill="#9a9a9a"/><rect x="759.3" y="36.599999999999994" width="9" height="0.8" fill="#9a9a9a"/><rect x="771.8" y="29.699999999999996" width="9" height="0.8" fill="#9a9a9a"/><rect x="771.8" y="31.999999999999996" width="9" height="0.8" fill="#9a9a9a"/><rect x="771.8" y="34.3" width="9" height="0.8" fill="#9a9a9a"/><rect x="771.8" y="36.599999999999994" width="9" height="0.8" fill="#9a9a9a"/><rect x="784.5" y="29.699999999999996" width="9" height="0.8" fill="#9a9a9a"/><rect x="784.5" y="31.999999999999996" width="9" height="0.8" fill="#9a9a9a"/><rect x="784.5" y="34.3" width="9" height="0.8" fill="#9a9a9a"/><rect x="784.5" y="36.599999999999994" width="9" height="0.8" fill="#9a9a9a"/><path d="M795 32.3L799 32.3L797 34.8Z" fill="#9a9a9a"/><rect x="803.0" y="29.699999999999996" width="8" height="0.8" fill="#9a9a9a"/><rect x="803.0" y="31.999999999999996" width="8" height="0.8" fill="#9a9a9a"/><rect x="803.0" y="34.3" width="8" height="0.8" fill="#9a9a9a"/><rect x="803.0" y="36.599999999999994" width="8" height="0.8" fill="#9a9a9a"/><path d="M813 32.3L817 32.3L815 34.8Z" fill="#9a9a9a"/><rect x="820" y="28.5" width="9" height="5" fill="#aaa"/><rect x="820.0" y="31.699999999999996" width="9" height="0.8" fill="#9a9a9a"/><rect x="820.0" y="33.99999999999999" width="9" height="0.8" fill="#9a9a9a"/><path d="M831 32.3L835 32.3L833 34.8Z" fill="#9a9a9a"/><rect x="837" y="28" width="0.9" height="11" fill="#9a9a9a"/><rect x="839.5" y="29.699999999999996" width="8" height="0.8" fill="#9a9a9a"/><rect x="839.5" y="31.999999999999996" width="8" height="0.8" fill="#9a9a9a"/><rect x="839.5" y="34.3" width="8" height="0.8" fill="#9a9a9a"/><rect x="839.5" y="36.599999999999994" width="8" height="0.8" fill="#9a9a9a"/><path d="M848.5 32.3L852.5 32.3L850.5 34.8Z" fill="#9a9a9a"/><text x="860" y="33.8" font-size="10" fill="#9a9a9a" text-anchor="middle" dominant-baseline="central" font-family="Liberation Sans" >A</text><rect x="855" y="28" width="10" height="0.9" fill="#9a9a9a"/><path d="M866 32.3L870 32.3L868 34.8Z" fill="#9a9a9a"/><path d="M608 43.5H613L615.5 46V53H608Z" fill="none" stroke="#9a9a9a" stroke-width="0.9"/><rect x="618.5" y="42.5" width="34.5" height="11.5" rx="1" fill="#fff" stroke="#ddd" stroke-width="0.8"/><rect x="648.5" y="42.5" width="0.8" height="11.5" fill="#ddd"/><rect x="654.5" y="42.5" width="25" height="11.5" rx="1" fill="#fff" stroke="#ddd" stroke-width="0.8"/><rect x="675" y="42.5" width="0.8" height="11.5" fill="#ddd"/><path d="M649 47.2L653 47.2L651 49.7Z" fill="#9a9a9a"/><path d="M675.3 47.2L679.3 47.2L677.3 49.7Z" fill="#9a9a9a"/><text x="621" y="48.2" font-size="7" fill="#444" dominant-baseline="central" textLength="25.5" lengthAdjust="spacingAndGlyphs">苹方简转</text><text x="657.6" y="48.2" font-size="7.5" fill="#555" dominant-baseline="central" font-family="Liberation Sans" textLength="14.2" lengthAdjust="spacingAndGlyphs">14px</text><circle cx="686" cy="48.2" r="3.5" fill="none" stroke="#9a9a9a"/><rect x="681" y="47.7" width="10" height="1" fill="#9a9a9a"/><path d="M692.4 47.2L696.4 47.2L694.4 49.7Z" fill="#9a9a9a"/><rect x="700.15" y="44.2" width="7.5" height="8" rx="1" fill="none" stroke="#9a9a9a" stroke-width="0.9"/><rect x="712.85" y="44.2" width="7.5" height="8" rx="1" fill="none" stroke="#9a9a9a" stroke-width="0.9"/><rect x="725.25" y="44.2" width="7.5" height="8" rx="1" fill="none" stroke="#9a9a9a" stroke-width="0.9"/><rect x="738.25" y="44.2" width="7.5" height="8" rx="1" fill="none" stroke="#9a9a9a" stroke-width="0.9"/><rect x="750.75" y="44.2" width="7.5" height="8" rx="1" fill="none" stroke="#9a9a9a" stroke-width="0.9"/><rect x="776.75" y="44.2" width="7.5" height="8" rx="1" fill="none" stroke="#9a9a9a" stroke-width="0.9"/><rect x="789.25" y="44.2" width="7.5" height="8" rx="1" fill="none" stroke="#9a9a9a" stroke-width="0.9"/><rect x="703.9" y="44" width="0.8" height="9" fill="#9a9a9a"/><rect x="713" y="44" width="0.8" height="9" fill="#9a9a9a"/><rect x="719" y="44" width="0.8" height="9" fill="#9a9a9a"/><path d="M764 53 V44 L770 43 V51" fill="none" stroke="#9a9a9a"/><circle cx="763" cy="53" r="1.5" fill="#9a9a9a"/><circle cx="769" cy="51" r="1.5" fill="#9a9a9a"/><path d="M801 51 L807 45 L810 48 L804 54Z" fill="none" stroke="#9a9a9a"/><rect x="800" y="54" width="10" height="0.8" fill="#9a9a9a"/><path d="M818.5 43.5 L820 47 L824 47 L821 49.5 L822 53 L818.5 51 L815 53 L816 49.5 L813 47 L817 47Z" fill="none" stroke="#9a9a9a" stroke-width="0.9"/><path d="M826 53 L834 44" stroke="#777" stroke-width="2"/><path d="M837 47.2L841 47.2L839 49.7Z" fill="#9a9a9a"/><circle cx="848.5" cy="47.7" r="4" fill="none" stroke="#9a9a9a"/><path d="M851.5 51 L854 53.5" stroke="#9a9a9a"/><text x="613.9" y="63.1" font-size="5.8" font-weight="bold" fill="#777" text-anchor="middle" dominant-baseline="central" font-family="Liberation Sans">HTML</text><text x="629.5" y="63.1" font-size="7.5" fill="#9a9a9a" text-anchor="middle" dominant-baseline="central" font-family="Liberation Sans" font-weight="bold">99</text><path d="M635.5 62.1L639.5 62.1L637.5 64.6Z" fill="#9a9a9a"/><path d="M645 66 L650 60" stroke="#9a9a9a" stroke-width="1"/><rect x="642.5" y="62" width="5" height="4" rx="2" fill="none" stroke="#9a9a9a" transform="rotate(-45 645 64)"/><rect x="647" y="58.5" width="5" height="4" rx="2" fill="none" stroke="#9a9a9a" transform="rotate(-45 649.5 60.5)"/><rect x="656" y="59" width="8" height="8" fill="none" stroke="#ccc"/><rect x="669" y="58" width="9" height="2" fill="#999"/><rect x="669.0" y="60.99999999999999" width="9" height="0.8" fill="#9a9a9a"/><rect x="669.0" y="63.29999999999999" width="9" height="0.8" fill="#9a9a9a"/><text x="688" y="63.1" font-size="6.5" fill="#9a9a9a" text-anchor="middle" dominant-baseline="central" font-family="Liberation Sans" >导入</text><path d="M694 62.1L698 62.1L696 64.6Z" fill="#9a9a9a"/><text x="703" y="63.1" font-size="11" fill="#9a9a9a" text-anchor="middle" dominant-baseline="central" font-family="Liberation Sans" >Ω</text><path d="M709.6 62.1L713.6 62.1L711.6 64.6Z" fill="#9a9a9a"/><circle cx="720.7" cy="63.1" r="4.2" fill="none" stroke="#9a9a9a"/><path d="M718.7 62 V64 Q720.7 66 722.7 64 V62" fill="none" stroke="#9a9a9a" stroke-width="0.7"/><rect x="729.2" y="59.5" width="9" height="0.8" fill="#9a9a9a"/><rect x="729.2" y="61.8" width="9" height="0.8" fill="#9a9a9a"/><rect x="729.2" y="64.1" width="9" height="0.8" fill="#9a9a9a"/><rect x="729.2" y="66.4" width="9" height="0.8" fill="#9a9a9a"/><path d="M739.7 62.1L743.7 62.1L741.7 64.6Z" fill="#9a9a9a"/><rect x="747.3" y="59.5" width="8" height="0.8" fill="#9a9a9a"/><rect x="747.3" y="61.8" width="8" height="0.8" fill="#9a9a9a"/><rect x="747.3" y="64.1" width="8" height="0.8" fill="#9a9a9a"/><rect x="747.3" y="66.4" width="8" height="0.8" fill="#9a9a9a"/><path d="M757.2 62.1L761.2 62.1L759.2 64.6Z" fill="#9a9a9a"/><rect x="778.5" y="58.6" width="7" height="9" rx="1" fill="none" stroke="#9a9a9a" stroke-width="0.9"/><rect x="791.0" y="59.5" width="8" height="0.8" fill="#9a9a9a"/><rect x="791.0" y="61.8" width="8" height="0.8" fill="#9a9a9a"/><rect x="791.0" y="64.1" width="8" height="0.8" fill="#9a9a9a"/><rect x="791.0" y="66.4" width="8" height="0.8" fill="#9a9a9a"/><path d="M801 62.1L805 62.1L803 64.6Z" fill="#9a9a9a"/><path d="M809 61 H815 Q818 61 818 64 Q818 67 815 67 H810" fill="none" stroke="#9a9a9a"/><path d="M811 59 L809 61 L811 63" fill="none" stroke="#9a9a9a"/><path d="M830 61 H824 Q821 61 821 64 Q821 67 824 67 H829" fill="none" stroke="#ccc"/><rect x="834" y="58" width="3" height="3" fill="none" stroke="#9a9a9a" stroke-width="0.8"/><rect x="834" y="64" width="3" height="3" fill="none" stroke="#9a9a9a" stroke-width="0.8"/><rect x="838.0" y="59.5" width="6" height="0.8" fill="#9a9a9a"/><rect x="838.0" y="61.8" width="6" height="0.8" fill="#9a9a9a"/><rect x="838.0" y="64.1" width="6" height="0.8" fill="#9a9a9a"/><rect x="838.0" y="66.4" width="6" height="0.8" fill="#9a9a9a"/><path d="M846 68 L848 62 H853 L855 68Z" fill="none" stroke="#9a9a9a"/><circle cx="850.5" cy="60" r="2.5" fill="none" stroke="#9a9a9a"/><rect x="870.0" y="59.1" width="9" height="8" rx="1" fill="none" stroke="#9a9a9a" stroke-width="0.9"/></svg><div class="a" style="left:714.7px;top:27.1px;width:12.1px;height:12.3px;border:1px solid #f3c99a;border-radius:2px"></div><div class="a" style="left:763.3px;top:57.3px;width:12.1px;height:11.4px;border:1px solid #f3c99a;border-radius:2px"></div><svg class="a" style="left:0;top:0" width="1080" height="80" viewBox="0 0 1080 80"><rect x="766.3" y="59.1" width="6" height="8" rx="1" fill="none" stroke="#9a9a9a" stroke-width="0.9"/><rect x="767" y="59" width="1" height="8" fill="#9a9a9a"/><circle cx="771" cy="63.1" r="0.8" fill="#9a9a9a"/></svg><div class="t" style="left:618.5px;top:70.3px;font-size:8px;color:#555;letter-spacing:1.34px">#选取任意一个模板，示例模板id：</div><div class="t" style="left:762px;top:70.8px;font-size:9px;color:#333;transform:scale(0.9444);transform-origin:0 0;letter-spacing:1.8px;font-weight:bold">116728</div><div class="a" style="left:616.7px;top:83.8px;width:28px;height:9.4px;background:#f1f1f1"></div><div class="t" style="left:617.5px;top:84.5px;font-size:8px;color:#999;">✛拖动</div><div class="a" style="left:613.2px;top:93.2px;width:255.5px;height:336.5px;border:1.3px dotted #f26b6b"></div><div class="a" style="left:615.2px;top:95.2px;width:251.5px;height:490px;border:1.8px solid #6cc0b0"></div><div class="a" style="left:817px;top:97px;width:49px;height:33px;overflow:hidden"><div class="a" style="left:4px;top:-24.5px;width:54px;height:54px;border-radius:50%;background:linear-gradient(55deg,#fde9de 22%,#fbd69c 58%,#f2b632 88%,#e0a830 100%)"></div></div><div class="tc" style="left:742.2px;top:122px;font-size:7px;color:#c9a28a;letter-spacing:0.75px">AUTUMN SPECIAL</div><div class="a" style="left:622px;top:254.8px;width:196px;height:86.2px;background:linear-gradient(90deg,#6a8858 0%,#98a066 22%,#d2b474 48%,#f6c97e 75%,#fcd49c 100%)"></div><div class="a" style="left:622px;top:254.8px;width:196px;height:86.2px;background:linear-gradient(180deg,rgba(240,180,140,0) 15%,rgba(240,182,142,0.55) 65%,rgba(246,192,158,0.85) 100%)"></div><div class="a" style="left:622px;top:254.8px;width:196px;height:86.2px;background:radial-gradient(ellipse 70% 90% at 95% 95%,rgba(253,230,220,1) 0,rgba(253,230,220,0.6) 40%,rgba(253,230,220,0) 75%)"></div><svg class="a" style="left:634.7px;top:134.2px" width="214.5" height="142" viewBox="634.7 134.2 214.5 142">
<defs>
<linearGradient id="wall" x1="0" x2="1"><stop offset="0" stop-color="#9c8c7c"/><stop offset="0.3" stop-color="#b4a698"/><stop offset="0.65" stop-color="#c8bdb2"/><stop offset="1" stop-color="#d8d0c8"/></linearGradient>
<filter id="bl1" x="-50%" y="-50%" width="200%" height="200%"><feGaussianBlur stdDeviation="1"/></filter>
<filter id="bl2" x="-50%" y="-50%" width="200%" height="200%"><feGaussianBlur stdDeviation="2"/></filter>
<filter id="bl4" x="-50%" y="-50%" width="200%" height="200%"><feGaussianBlur stdDeviation="3.5"/></filter>
</defs>
<rect x="634.7" y="134.2" width="214.5" height="142" fill="url(#wall)"/>
<rect x="634.7" y="134.2" width="16" height="142" fill="#86664a" filter="url(#bl2)"/>
<rect x="648" y="140" width="24" height="136" fill="#74685c" filter="url(#bl2)"/>
<rect x="700" y="145" width="70" height="131" fill="#6a5c50" filter="url(#bl1)"/>
<rect x="711" y="152" width="59" height="124" fill="#8e8276"/>
<rect x="726" y="198" width="14" height="30" fill="#3c3430" filter="url(#bl1)"/>
<rect x="742" y="134.2" width="30" height="70" fill="#4e443c" filter="url(#bl2)"/>
<path d="M824 134.2 H849.2 V158 Z" fill="#efeeec"/>
<rect x="840" y="150" width="9.2" height="126" fill="#e2ddd8" opacity="0.7"/>
<path d="M634.7 134.2 H652 L634.7 162Z" fill="#eeeeed" filter="url(#bl1)"/>
<path d="M669 196 C690 175 715 160 736 141" stroke="#5f6a40" stroke-width="2.6" fill="none"/>
<ellipse cx="772" cy="141" rx="19" ry="8" fill="#3a4a30" filter="url(#bl1)"/>
<ellipse cx="657.6" cy="149" rx="6" ry="5" fill="#5a7a50" filter="url(#bl1)"/>
<ellipse cx="661" cy="218" rx="24" ry="24" fill="#3f4c36" filter="url(#bl4)"/>
<ellipse cx="697" cy="216" rx="12" ry="17" fill="#66765e" filter="url(#bl4)"/>
<ellipse cx="648" cy="270" rx="12" ry="6" fill="#2c2c2a" filter="url(#bl2)"/>
<!-- hair -->
<path d="M755 205 C750 180 756 158 774 156 C792 155 803 170 802 190 C802 205 806 220 803 228 L785 228 L760 222 C756 216 756 210 755 205Z" fill="#b8956c" filter="url(#bl1)"/>
<ellipse cx="770" cy="193" rx="10" ry="14" fill="#e3c0a8"/>
<path d="M759 180 C762 168 780 166 785 178 C778 175 768 175 759 183Z" fill="#b08a5c"/>
<path d="M758 158 Q769 153 780 157" stroke="#6a5a4a" stroke-width="2" fill="none"/>
<!-- shirt -->
<path d="M696 276.2 C694 255 698 232 708 218 C716 208 732 204 745 201 C752 203 758 208 762 214 L772 240 L788 216 C795 212 805 209 812 214 C820 224 822 250 818 276.2Z" fill="#94582a"/>
<path d="M762 214 L772 240 L788 216 C780 222 770 222 762 214Z" fill="#d9a98a"/>
<rect x="748" y="266" width="55" height="5" fill="#dfb99c"/>
<rect x="748" y="271" width="55" height="5.2" fill="#1e1e20"/>
<g fill="#ece4da"><circle cx="732" cy="226" r="4.5"/><circle cx="708.6" cy="236" r="4.3"/><circle cx="718.6" cy="244.7" r="4.2"/><circle cx="705" cy="252" r="3.8"/><circle cx="747" cy="231" r="3.8"/><circle cx="760.7" cy="241" r="4.5"/><circle cx="769.4" cy="256" r="4.5"/><circle cx="749.5" cy="253.4" r="3.8"/><circle cx="805.4" cy="220" r="4.2"/><circle cx="808" cy="238.5" r="4"/><circle cx="783" cy="267" r="3.8"/><circle cx="794" cy="258" r="3.5"/><circle cx="815" cy="251" r="3"/><circle cx="728" cy="266" r="3.5"/></g>
<rect x="752" y="207.4" width="21" height="21" rx="2" fill="#1e1e1e"/>
<circle cx="763" cy="218.6" r="6" fill="#3e3e40"/><circle cx="763" cy="218.6" r="3.2" fill="#1a1a1c"/>
<ellipse cx="780" cy="227" rx="5.5" ry="8.5" fill="#e0b89c"/>
<ellipse cx="836.5" cy="274" rx="14" ry="4" fill="#6a7040" filter="url(#bl1)"/>
</svg><svg class="a" style="left:0;top:0" width="1080" height="575" viewBox="0 0 1080 575"><defs><linearGradient id="ng" x1="0.1" y1="0.9" x2="0.95" y2="0.3"><stop offset="0" stop-color="#d8a59c"/><stop offset="0.45" stop-color="#f3cfc0"/><stop offset="0.75" stop-color="#f6c266"/><stop offset="1" stop-color="#f2b032"/></linearGradient></defs><polygon points="679.4,131.0 677.3,132.8 678.9,135.1 676.3,136.4 677.3,139.0 674.5,139.5 674.7,142.3 671.9,142.1 671.4,144.9 668.8,143.9 667.5,146.5 665.2,144.9 663.4,147.0 661.6,144.9 659.3,146.5 658.0,143.9 655.4,144.9 654.9,142.1 652.1,142.3 652.3,139.5 649.5,139.0 650.5,136.4 647.9,135.1 649.5,132.8 647.4,131.0 649.5,129.2 647.9,126.9 650.5,125.6 649.5,123.0 652.3,122.5 652.1,119.7 654.9,119.9 655.4,117.1 658.0,118.1 659.3,115.5 661.6,117.1 663.4,115.0 665.2,117.1 667.5,115.5 668.8,118.1 671.4,117.1 671.9,119.9 674.7,119.7 674.5,122.5 677.3,123.0 676.3,125.6 678.9,126.9 677.3,129.2" fill="url(#ng)"/></svg><div class="tc" style="left:663.6px;top:130.4px;font-size:10px;color:#fff;transform:translate(-50%,-50%) scale(0.9500);font-weight:bold;letter-spacing:0.9px">NEW</div><div class="t" style="left:636px;top:294px;font-size:17px;color:#fff;transform:scale(0.9706);transform-origin:0 0;font-weight:bold;letter-spacing:0.65px">NEW ARRIVAL</div><div class="t" style="left:636px;top:312px;font-size:12px;color:#fff;transform:scale(0.9583);transform-origin:0 0;letter-spacing:0.3px">新品上市 时髦入秋</div><svg class="a" style="left:0;top:0" width="1080" height="575" viewBox="0 0 1080 575"><path d="M839.5 297.5 Q840.15 303.35 845.025 304 Q840.15 304.65 839.5 310.5 Q838.85 304.65 833.975 304 Q838.85 303.35 839.5 297.5Z" fill="#f7c452"/><path d="M839.5 315.2 Q840.15 321.05 845.025 321.7 Q840.15 322.34999999999997 839.5 328.2 Q838.85 322.34999999999997 833.975 321.7 Q838.85 321.05 839.5 315.2Z" fill="#c99878"/><path d="M839.5 332.5 Q840.15 338.35 845.025 339 Q840.15 339.65 839.5 345.5 Q838.85 339.65 833.975 339 Q838.85 338.35 839.5 332.5Z" fill="#efd2c2"/><path d="M639.8 428.3 Q640.3499999999999 433.25 644.4749999999999 433.8 Q640.3499999999999 434.35 639.8 439.3 Q639.25 434.35 635.125 433.8 Q639.25 433.25 639.8 428.3Z" fill="#f7c452"/><path d="M656 428.3 Q656.55 433.25 660.675 433.8 Q656.55 434.35 656 439.3 Q655.45 434.35 651.325 433.8 Q655.45 433.25 656 428.3Z" fill="#c99878"/><path d="M672.3 428.3 Q672.8499999999999 433.25 676.9749999999999 433.8 Q672.8499999999999 434.35 672.3 439.3 Q671.75 434.35 667.625 433.8 Q671.75 433.25 672.3 428.3Z" fill="#efd2c2"/></svg><div class="tc" style="left:741px;top:371px;font-size:9px;color:#6e6e5e;transform:translate(-50%,-50%) scale(0.9444);letter-spacing:0.2px">秋季新品如期而至，从不辜负</div><div class="tc" style="left:741px;top:384.5px;font-size:9px;color:#6e6e5e;transform:translate(-50%,-50%) scale(0.9444);letter-spacing:0.2px">承蒙时光不弃，未来可期</div><div class="tc" style="left:741px;top:398px;font-size:9px;color:#6e6e5e;transform:translate(-50%,-50%) scale(0.9444);letter-spacing:0.2px">不负心中热爱，追逐你的身影</div><div class="a" style="left:627.3px;top:418px;width:228.7px;height:9.5px;border:1.2px dotted #9aa8f0"></div><svg class="a" style="left:733px;top:418.5px" width="16" height="16" viewBox="-8 -8 16 16"><g fill="#7b8a62"><ellipse cx="0" cy="-3.6" rx="1.6" ry="3.6" transform="rotate(0)"/><ellipse cx="0" cy="-3.6" rx="1.6" ry="3.6" transform="rotate(60)"/><ellipse cx="0" cy="-3.6" rx="1.6" ry="3.6" transform="rotate(120)"/><ellipse cx="0" cy="-3.6" rx="1.6" ry="3.6" transform="rotate(180)"/><ellipse cx="0" cy="-3.6" rx="1.6" ry="3.6" transform="rotate(240)"/><ellipse cx="0" cy="-3.6" rx="1.6" ry="3.6" transform="rotate(300)"/></g><circle r="1.5" fill="#7b8a62"/></svg><svg class="a" style="left:634px;top:445px" width="98" height="130" viewBox="634 445 98 130">
<defs><linearGradient id="sky" x1="0" y1="0" x2="0" y2="1"><stop offset="0" stop-color="#6f97aa"/><stop offset="0.45" stop-color="#93afbb"/><stop offset="0.7" stop-color="#a9bcc2"/><stop offset="0.72" stop-color="#a3b2b0"/></linearGradient>
<filter id="pb" x="-20%" y="-20%" width="140%" height="140%"><feGaussianBlur stdDeviation="0.6"/></filter></defs>
<rect x="634" y="445" width="98" height="130" fill="url(#sky)"/>
<path d="M634 470 C660 462 700 470 732 460 V480 C700 490 660 484 634 492Z" fill="#a4bac4" opacity="0.5"/>
<path d="M634 536 L680 533 L732 535 V548 H634Z" fill="#707460"/>
<rect x="634" y="546" width="98" height="29" fill="#5b6b3a"/>
<rect x="634" y="555" width="98" height="20" fill="#4e6232"/>
<g filter="url(#pb)">
<rect x="646" y="539" width="20" height="9" rx="3" fill="#744530"/><rect x="648" y="547" width="1.5" height="7" fill="#5a3a24"/><rect x="663" y="547" width="1.5" height="7" fill="#5a3a24"/>
<rect x="711" y="538" width="20" height="10" rx="3" fill="#6a3e28"/><rect x="713" y="547" width="1.5" height="7" fill="#4e3020"/>
<path d="M670 510 Q676 505 682 510 L684 530 L683 570 H670 L669 530Z" fill="#e0d6c4"/>
<path d="M669.5 508 Q676 505 682.5 508 L684 528 H668.5Z" fill="#b8a68a"/>
<ellipse cx="676" cy="503" rx="4" ry="5" fill="#2e241e"/><ellipse cx="676" cy="504.5" rx="2.6" ry="3.2" fill="#d8b49a"/>
<path d="M685 505 Q692 501 699 505 L701 530 L699 555 H686 L684 530Z" fill="#d9c8ac"/>
<rect x="688" y="554" width="2.5" height="15" fill="#2a2420"/><rect x="694.5" y="554" width="2.5" height="15" fill="#2a2420"/>
<ellipse cx="691.5" cy="497.5" rx="4" ry="4" fill="#1e1a18"/><ellipse cx="691.5" cy="500" rx="2.7" ry="3" fill="#d4ae92"/>
</g>
</svg><svg class="a" style="left:744.8px;top:433px" width="98.5" height="142" viewBox="744.8 433 98.5 142">
<filter id="pb3" x="-20%" y="-20%" width="140%" height="140%"><feGaussianBlur stdDeviation="0.8"/></filter>
<rect x="744.8" y="433" width="98.5" height="142" fill="#d8b3a8"/>
<g filter="url(#pb3)">
<rect x="744.8" y="433" width="42" height="115" fill="#8c5c4a"/>
<rect x="744.8" y="433" width="42" height="12" fill="#4a3a32"/>
<path d="M745 450 L770 470 L770 476 L745 456Z" fill="#c49888"/>
<rect x="757.5" y="433" width="6.5" height="115" fill="#2e2a28"/>
<rect x="775" y="445" width="4" height="90" fill="#5a3e34"/>
<rect x="786" y="433" width="40" height="110" fill="#dbb6ac"/>
<rect x="826" y="433" width="17.5" height="112" fill="#c9a06e"/>
<rect x="832" y="442" width="3.5" height="78" fill="#3a2a22"/>
<path d="M744.8 490 C752 482 760 492 768 485 C776 480 786 492 790 505 L790 545 H744.8Z" fill="#3e5434"/>
<path d="M765 498 C772 492 782 500 786 515 L785 540 H766Z" fill="#6a7e58"/>
<rect x="744.8" y="520" width="16" height="40" fill="#3a3a38"/>
<rect x="761" y="545" width="29" height="20" fill="#2e3236"/>
<rect x="744.8" y="548" width="98.5" height="27" fill="#8e8884"/>
<path d="M786 486 Q796 479 808 485 L814 515 L827 552 L815 557 H779 L782 515Z" fill="#b28b64"/>
<rect x="796" y="485" width="7" height="25" fill="#eceae8"/>
<g fill="#2a2a2a"><rect x="796" y="488" width="7" height="1.4"/><rect x="796" y="492" width="7" height="1.4"/><rect x="796" y="496" width="7" height="1.4"/><rect x="796" y="500" width="7" height="1.4"/><rect x="796" y="504" width="7" height="1.4"/></g>
<path d="M791 512 H805 L808 566 H786Z" fill="#1c1c1e"/>
<rect x="812" y="520" width="9" height="20" fill="#e6e2de"/>
<ellipse cx="795" cy="469" rx="6" ry="3.5" fill="#1e1e22"/>
<ellipse cx="797" cy="475" rx="3.5" ry="4.5" fill="#c9a48c"/>
<path d="M799 472 C805 474 805 482 801 485" stroke="#3a2a22" stroke-width="2.5" fill="none"/>
<rect x="776" y="566" width="10" height="4" fill="#1a1a1a"/><rect x="797" y="566" width="10" height="4" fill="#1a1a1a"/>
</g>
</svg><div class="a" style="left:622.5px;top:565.3px;width:11.5px;height:10px;background:#6d8a5e"></div><div class="a" style="left:732px;top:565.3px;width:12.8px;height:10px;background:#bfbf88"></div><div class="a" style="left:843.3px;top:565.3px;width:16.5px;height:10px;background:#f5d070"></div><svg class="a" style="left:881px;top:25px" width="199" height="75" viewBox="881 25 199 75">
<defs><linearGradient id="sky2" x1="0" y1="0" x2="0" y2="1"><stop offset="0" stop-color="#e3f4fc"/><stop offset="1" stop-color="#f4fafd"/></linearGradient></defs>
<rect x="881" y="25" width="199" height="75" fill="url(#sky2)"/>
<path d="M881 54.3 C910 51 935 48 945 47.8 C965 48 985 49 990 53 C994 58 985 64 980 68 C972 74 966 78 966 84 L966 100 L881 100Z" fill="#f6fafd"/>
<path d="M881 64 C910 61 930 58.5 940 58.2 C955 58 968 59 974 62 C979 66 974 72 970 77 C966 81 964 86 964 95 L881 100Z" fill="#f0f2f1"/>
<path d="M881 49.1 C910 47.5 935 46 951.7 45.6 C970 45.5 990 46.5 1002 49.1 C1010 52 1012 60 1006 66 C1003 72 1015 78 1030 80 C1045 81.2 1060 81.3 1080 81.3" fill="none" stroke="#8dd0f2" stroke-width="2" stroke-dasharray="5 4.5"/>
<g fill="none" stroke="#d0ebf9" stroke-width="2.4" stroke-linecap="round"><path d="M1068 54 C1062 47 1051 50 1055 57 C1059 63 1067 67 1063 72.5 C1059 77 1050 75 1052 69"/><path d="M1071 61 C1069 69 1069 74 1073 74 C1077 74 1079 68 1080 61 M1080 61 C1079 69 1080 74 1083 74"/></g>
</svg><div class="a" style="left:881px;top:95px;width:199px;height:480px;background:#f0f2f1"></div><div class="a" style="left:881.5px;top:281.2px;width:53px;height:17.6px;background:#fafafa;border-radius:2px;box-shadow:0 0 1px rgba(0,0,0,0.12)"></div><div class="tc" style="left:905.5px;top:290px;font-size:8px;color:#666;transform:translate(-50%,-50%) scale(0.9625);">保存同步</div><div class="a" style="left:881.5px;top:301.8px;width:53px;height:17.6px;background:#fafafa;border-radius:2px;box-shadow:0 0 1px rgba(0,0,0,0.12)"></div><div class="tc" style="left:905.5px;top:310.6px;font-size:8px;color:#666;transform:translate(-50%,-50%) scale(0.9625);">快速保存</div><div class="a" style="left:881.5px;top:321.2px;width:53px;height:17.6px;background:#fafafa;border-radius:2px;box-shadow:0 0 1px rgba(0,0,0,0.12)"></div><div class="tc" style="left:905.5px;top:330px;font-size:8px;color:#666;transform:translate(-50%,-50%) scale(0.9625);">保存同步</div><div class="a" style="left:881.5px;top:341.2px;width:53px;height:17.6px;background:#fafafa;border-radius:2px;box-shadow:0 0 1px rgba(0,0,0,0.12)"></div><div class="tc" style="left:905.5px;top:350px;font-size:8px;color:#666;transform:translate(-50%,-50%) scale(0.9625);">语音合成</div><div class="a" style="left:881.5px;top:361.2px;width:53px;height:17.6px;background:#fafafa;border-radius:2px;box-shadow:0 0 1px rgba(0,0,0,0.12)"></div><div class="tc" style="left:905.5px;top:370px;font-size:8px;color:#666;transform:translate(-50%,-50%) scale(0.9625);">外网复制</div><div class="a" style="left:881.5px;top:392.7px;width:53px;height:17.6px;background:#fafafa;border-radius:2px;box-shadow:0 0 1px rgba(0,0,0,0.12)"></div><div class="tc" style="left:905.5px;top:401.5px;font-size:8px;color:#666;transform:translate(-50%,-50%) scale(0.9625);">清空内容</div><div class="a" style="left:881.5px;top:412.7px;width:53px;height:17.6px;background:#fafafa;border-radius:2px;box-shadow:0 0 1px rgba(0,0,0,0.12)"></div><div class="tc" style="left:905.5px;top:421.5px;font-size:8px;color:#666;transform:translate(-50%,-50%) scale(0.9625);">手机预览</div><div class="a" style="left:881.5px;top:432.2px;width:53px;height:17.6px;background:#fafafa;border-radius:2px;box-shadow:0 0 1px rgba(0,0,0,0.12)"></div><div class="tc" style="left:905.5px;top:441px;font-size:8px;color:#666;transform:translate(-50%,-50%) scale(0.9625);">生成长图</div><div class="a" style="left:881.5px;top:452.2px;width:53px;height:17.6px;background:#fafafa;border-radius:2px;box-shadow:0 0 1px rgba(0,0,0,0.12)"></div><div class="tc" style="left:905.5px;top:461px;font-size:8px;color:#666;transform:translate(-50%,-50%) scale(0.9625);">云端草稿</div><div class="a" style="left:881.5px;top:471.8px;width:53px;height:17.6px;background:#fafafa;border-radius:2px;box-shadow:0 0 1px rgba(0,0,0,0.12)"></div><div class="tc" style="left:905.5px;top:480.6px;font-size:8px;color:#666;transform:translate(-50%,-50%) scale(0.9625);">更多功能</div><div class="a" style="left:881.5px;top:500.2px;width:53px;height:17.6px;background:#fafafa;border-radius:2px;box-shadow:0 0 1px rgba(0,0,0,0.12)"></div><div class="tc" style="left:905.5px;top:509px;font-size:8px;color:#666;transform:translate(-50%,-50%) scale(0.9625);">回到顶部</div><div class="a" style="left:881.7px;top:95.5px;width:190px;height:116px;background:#27334b;border-radius:5px;box-shadow:0 1px 4px rgba(0,0,0,0.35)"></div><div class="a" style="left:887px;top:101px;width:1.5px;height:7px;background:#e8221a"></div><div class="t" style="left:890.6px;top:100.5px;font-size:7px;color:#e8221a;">全局样式</div><div class="a" style="left:1025.6px;top:99.4px;width:10.4px;height:10.4px;border-radius:50%;background:#7cc48a;border:1px solid #e8e8ee"></div><div class="a" style="left:1040.8px;top:99.4px;width:10.4px;height:10.4px;border-radius:50%;background:#8a7ad8;border:1px solid #e8e8ee"></div><div class="a" style="left:1056.5px;top:99.4px;width:10.4px;height:10.4px;border-radius:50%;background:#e05060;border:1px solid #e8e8ee"></div><svg class="a" style="left:0;top:90px" width="1080" height="30" viewBox="0 90 1080 30"><rect x="1028.2" y="104" width="5" height="3.6" fill="#fff"/><path d="M1032 104 V102.5 Q1032 101 1033.5 101 Q1035 101 1035 102.5" stroke="#fff" stroke-width="1" fill="none"/><text x="1046" y="107.5" font-size="8" font-weight="bold" fill="#fff" text-anchor="middle" font-family="Liberation Sans">?</text><path d="M1059.6 102.5 L1063.8 106.7 M1063.8 102.5 L1059.6 106.7" stroke="#fff" stroke-width="1.7"/></svg><div class="a" style="left:890.1px;top:114.6px;width:11.2px;height:11.2px;border-radius:50%;background:#5bb5a5;border:1px solid #fff"></div><div class="a" style="left:902.9px;top:114.6px;width:11.2px;height:11.2px;border-radius:50%;background:#ff0000;border:1px solid #fff"></div><div class="a" style="left:915.6999999999999px;top:114.6px;width:11.2px;height:11.2px;border-radius:50%;background:#ffffff;border:1px solid #fff"></div><div class="a" style="left:928.4px;top:114.6px;width:11.2px;height:11.2px;border-radius:50%;background:#27334b;border:1px solid #fff"></div><div class="a" style="left:941.3px;top:114.6px;width:11.2px;height:11.2px;border-radius:50%;background:#c9977a;border:1px solid #fff"></div><div class="a" style="left:954.0px;top:114.6px;width:11.2px;height:11.2px;border-radius:50%;background:#6b7a4a;border:1px solid #fff"></div><div class="a" style="left:966.8px;top:114.6px;width:11.2px;height:11.2px;border-radius:50%;background:#f5c9a0;border:1px solid #fff"></div><div class="t" style="left:889.6px;top:129.6px;font-size:8px;color:#d4d8e0;transform:scale(0.9000);transform-origin:0 0;">复制<span style="display:inline-block;width:5.2px"></span>剪切<span style="display:inline-block;width:5.2px"></span>更换样式<span style="display:inline-block;width:5.2px"></span>删除<span style="display:inline-block;width:5.2px"></span>背景<span style="display:inline-block;width:5.2px"></span>上移<span style="display:inline-block;width:5.2px"></span>下移<span style="display:inline-block;width:5.2px"></span>转为图片</div><div class="t" style="left:889.6px;top:142.70000000000002px;font-size:8px;color:#d4d8e0;transform:scale(0.9000);transform-origin:0 0;">后空行<span style="display:inline-block;width:5.2px"></span>前空行<span style="display:inline-block;width:5.2px"></span>传递<span style="display:inline-block;width:5.2px"></span>自动编号<span style="display:inline-block;width:5.2px"></span>样式代码</div><div class="t" style="left:889.6px;top:156.20000000000002px;font-size:8px;color:#d4d8e0;transform:scale(0.9000);transform-origin:0 0;">段落<span style="display:inline-block;width:5.2px"></span>保存<span style="display:inline-block;width:5.2px"></span>定位<span style="display:inline-block;width:5.2px"></span>替换文字<span style="display:inline-block;width:5.2px"></span>清除格式<span style="display:inline-block;width:5.2px"></span>隐藏区域样式</div><div class="t" style="left:889.3px;top:169.9px;font-size:8px;color:#d4d8e0;transform:scale(0.9000);transform-origin:0 0;">宽度比</div><div class="a" style="left:912.8px;top:172.0px;width:103.90000000000009px;height:3px;border-radius:2px;background:#a9b0bc"></div><div class="a" style="left:1013.5px;top:170.3px;width:6.4px;height:6.4px;border-radius:50%;background:#fff;border:1.5px solid #ccc"></div><div class="a" style="left:1024.5px;top:169.3px;width:27.4px;height:8.4px;background:#fff;border-radius:2px"></div><div class="t" style="left:1026px;top:170.0px;font-size:7px;color:#333;font-family:Liberation Serif">100</div><div class="t" style="left:889.3px;top:183.3px;font-size:8px;color:#d4d8e0;transform:scale(0.9000);transform-origin:0 0;">转角度</div><div class="a" style="left:912.8px;top:185.4px;width:104px;height:3px;border-radius:2px;background:#a9b0bc"></div><div class="a" style="left:963.6999999999999px;top:183.70000000000002px;width:6.4px;height:6.4px;border-radius:50%;background:#fff;border:1.5px solid #ccc"></div><div class="a" style="left:1024.5px;top:182.70000000000002px;width:27.4px;height:8.4px;background:#fff;border-radius:2px"></div><div class="t" style="left:1026px;top:183.4px;font-size:7px;color:#333;font-family:Liberation Serif">0</div><div class="t" style="left:889.3px;top:196.6px;font-size:8px;color:#d4d8e0;transform:scale(0.9000);transform-origin:0 0;">透明度</div><div class="a" style="left:912.8px;top:198.7px;width:103.90000000000009px;height:3px;border-radius:2px;background:#a9b0bc"></div><div class="a" style="left:1013.5px;top:197.0px;width:6.4px;height:6.4px;border-radius:50%;background:#fff;border:1.5px solid #ccc"></div><div class="a" style="left:1024.5px;top:196.0px;width:27.4px;height:8.4px;background:#fff;border-radius:2px"></div><div class="t" style="left:1026px;top:196.7px;font-size:7px;color:#333;font-family:Liberation Serif">1</div><div class="t" style="left:1054.5px;top:170px;font-size:6px;color:#d4d8e0;">%</div><svg class="a" style="left:972px;top:204px" width="8" height="6" viewBox="0 0 8 6"><path d="M1 5 L4 2 L7 5" stroke="#e8eaf0" stroke-width="1.3" fill="none"/></svg><div class="a" style="left:1063.5px;top:203px;width:8px;height:8px;border-radius:50%;background:#6a7890"></div><div class="a" style="left:1065px;top:206.5px;width:5px;height:1px;background:#2a3448"></div><div class="a" style="left:884px;top:211.3px;width:188px;height:3.6px;background:linear-gradient(90deg,#c9825a 0,#c9825a 2.5%,#6a6c8a 4%,#7a7a98 33%,#c9825a 35%,#c9825a 38%,#b4b4b4 39%,#b4b4b4 100%)"></div><div class="a" style="left:882px;top:215.5px;width:190px;height:76px;background:#27334b;border-radius:5px;box-shadow:0 1px 4px rgba(0,0,0,0.35)"></div><div class="a" style="left:887px;top:221px;width:1.5px;height:6.5px;background:#5a7ae0"></div><div class="t" style="left:891px;top:220.7px;font-size:8px;color:#6d8ee6;transform:scale(0.9000);transform-origin:0 0;">区域样式</div><div class="a" style="left:1040.8px;top:219px;width:10.8px;height:10.8px;border-radius:50%;background:#8a7ad8;border:1px solid #e8e8ee"></div><svg class="a" style="left:1040px;top:218px" width="12" height="12" viewBox="0 0 12 12"><text x="6.2" y="9.2" font-size="8" font-weight="bold" fill="#fff" text-anchor="middle" font-family="Liberation Sans">?</text></svg><div class="a" style="left:890.2px;top:234.2px;width:11px;height:11px;border-radius:50%;background:#f7c9a6;border:1px solid #fff"></div><div class="t" style="left:889.6px;top:249.0px;font-size:8px;color:#d4d8e0;transform:scale(0.9000);transform-origin:0 0;">宽度<span style="display:inline-block;width:4.2px"></span>背景<span style="display:inline-block;width:4.2px"></span>间距▾<span style="display:inline-block;width:4.2px"></span>边距▾<span style="display:inline-block;width:4.2px"></span>边框▾<span style="display:inline-block;width:4.2px"></span>阴影▾<span style="display:inline-block;width:4.2px"></span>前后空行▾<span style="display:inline-block;width:4.2px"></span>删除</div><div class="t" style="left:889.6px;top:262.29999999999995px;font-size:8px;color:#d4d8e0;transform:scale(0.9000);transform-origin:0 0;">复制<span style="display:inline-block;width:5px"></span>复制并插入<span style="display:inline-block;width:5px"></span>替换样式<span style="display:inline-block;width:5px"></span>区域代码</div><div class="t" style="left:889.6px;top:276.4px;font-size:8px;color:#d4d8e0;transform:scale(0.9000);transform-origin:0 0;">区域选择:<span style="display:inline-block;width:9px"></span>x<span style="display:inline-block;width:9px"></span>x</div><div class="a" style="left:1063px;top:282.5px;width:8px;height:8px;border-radius:50%;background:#6a7890"></div><div class="a" style="left:1064.5px;top:286px;width:5px;height:1px;background:#2a3448"></div><div class="a" style="left:0;top:24.7px;width:1080px;height:1.1px;background:#1c2538"></div><div class="a" style="left:94px;top:21px;width:47.5px;height:69px;border:4.4px solid #fd7f2c;border-radius:2px"></div><div class="a" style="left:61px;top:387.3px;width:217.2px;height:53.69999999999999px;border:4.4px solid #fd7f2c;border-radius:2px"></div><div class="a" style="left:612.3px;top:400.8px;width:260.70000000000005px;height:43.0px;border:4.4px solid #fd7f2c;border-radius:2px"></div><div class="a" style="left:941px;top:256.2px;width:44.39999999999998px;height:19.30000000000001px;border:4.2px solid #fd7f2c;border-radius:2px"></div><svg class="a" style="left:0;top:0" width="1080" height="575" viewBox="0 0 1080 575"><polygon points="47.0,44.8 51.8,72.3 56.6,67.0 81.3,93.7 83.7,91.9 65.4,60.4 71.9,57.5" fill="#fd7f2c" stroke="#fd7f2c" stroke-width="0.6" stroke-linejoin="round"/><polygon points="102.0,86.0 80.0,103.3 87.0,104.9 73.2,143.3 76.0,144.5 96.9,109.6 102.6,113.9" fill="#fd7f2c" stroke="#fd7f2c" stroke-width="0.6" stroke-linejoin="round"/><polygon points="185.0,402.5 212.3,396.5 206.7,392.0 276.6,330.2 274.8,327.8 199.8,383.4 196.6,377.0" fill="#fd7f2c" stroke="#fd7f2c" stroke-width="0.6" stroke-linejoin="round"/><polygon points="981.0,274.6 985.1,302.2 990.0,297.0 1042.8,365.3 1045.2,363.5 999.0,290.7 1005.6,287.9" fill="#fd7f2c" stroke="#fd7f2c" stroke-width="0.6" stroke-linejoin="round"/></svg><div class="t" style="left:214.5px;top:103.3px;font-size:22px;color:#fd7f2c;transform:scale(0.9891);transform-origin:0 0;font-weight:400;-webkit-text-stroke:0.25px #fd7f2c">在样式中心中选择需要替换的样式</div><div class="t" style="left:268px;top:346.5px;font-size:22px;color:#fd7f2c;transform:scale(0.9891);transform-origin:0 0;font-weight:400;-webkit-text-stroke:0.25px #fd7f2c">替换分割线</div><div class="t" style="left:422.5px;top:390.5px;font-size:22px;color:#fd7f2c;transform:scale(0.9891);transform-origin:0 0;font-weight:400;-webkit-text-stroke:0.25px #fd7f2c">需要替换的分割线</div></body></html>
